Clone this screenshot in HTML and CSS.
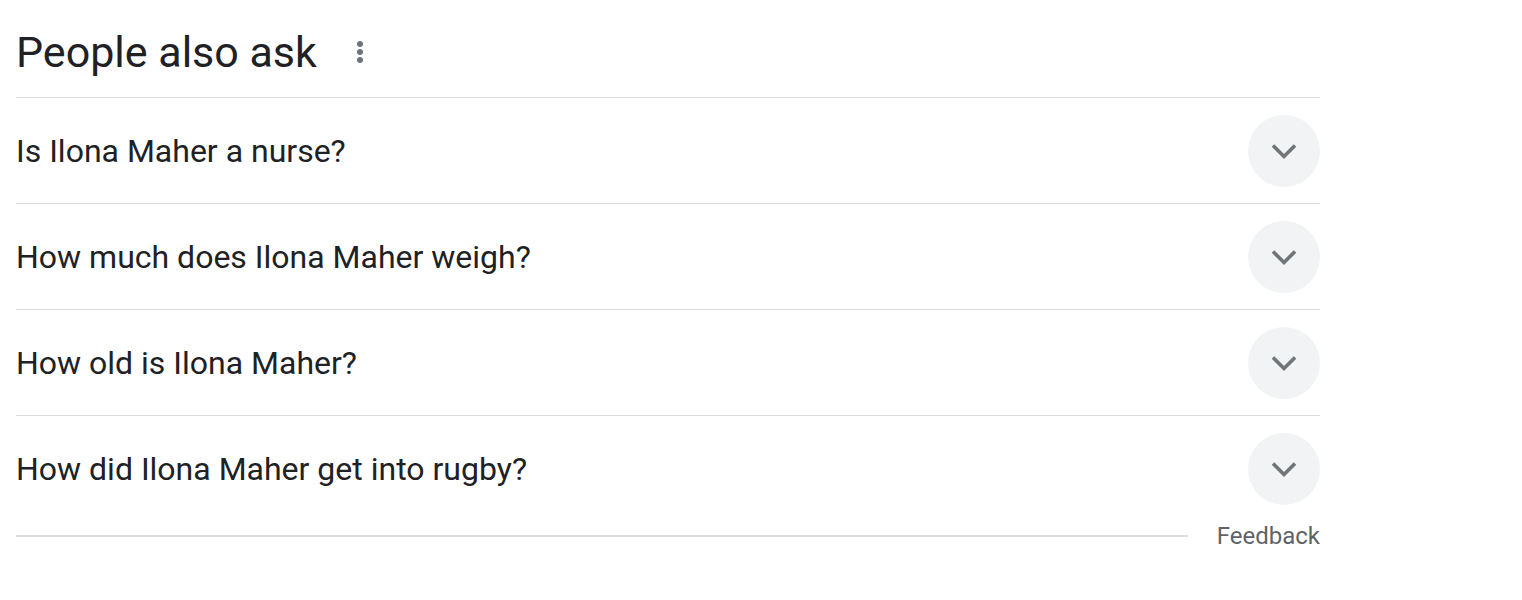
FILE: index.html
```html
<!DOCTYPE html>
<html>
<head>
<meta charset="utf-8">
<link rel="stylesheet" href="styles.css">
</head>
<body>
<div class="paa">
  <div class="paa-head">
    <h2 class="paa-title">People also ask</h2>
    <span class="paa-more" aria-label="More options">
      <svg width="8" height="24" viewBox="0 0 8 24"><circle cx="4" cy="4" r="3" fill="#70757a"/><circle cx="4" cy="12" r="3" fill="#70757a"/><circle cx="4" cy="20" r="3" fill="#70757a"/></svg>
    </span>
  </div>
  <div class="paa-list">
    <div class="paa-row"><span class="paa-q">Is Ilona Maher a nurse?</span><span class="paa-btn"><svg width="28" height="28" viewBox="0 0 28 28"><path d="M3 8.5l11 11 11-11" fill="none" stroke="#70757a" stroke-width="3.6"/></svg></span></div>
    <div class="paa-row"><span class="paa-q">How much does Ilona Maher weigh?</span><span class="paa-btn"><svg width="28" height="28" viewBox="0 0 28 28"><path d="M3 8.5l11 11 11-11" fill="none" stroke="#70757a" stroke-width="3.6"/></svg></span></div>
    <div class="paa-row"><span class="paa-q">How old is Ilona Maher?</span><span class="paa-btn"><svg width="28" height="28" viewBox="0 0 28 28"><path d="M3 8.5l11 11 11-11" fill="none" stroke="#70757a" stroke-width="3.6"/></svg></span></div>
    <div class="paa-row last"><span class="paa-q">How did Ilona Maher get into rugby?</span><span class="paa-btn"><svg width="28" height="28" viewBox="0 0 28 28"><path d="M3 8.5l11 11 11-11" fill="none" stroke="#70757a" stroke-width="3.6"/></svg></span></div>
  </div>
  <div class="paa-foot">
    <div class="paa-line"></div>
    <span class="paa-feedback">Feedback</span>
  </div>
</div>
</body>
</html>
```

FILE: styles.css
```css
html, body {
  margin: 0;
  padding: 0;
  background: #fff;
}
body {
  font-family: Roboto, "Noto Sans", Arial, sans-serif;
  color: #202124;
}
.paa {
  width: 1304px;
  margin-left: 16px;
}
.paa-head {
  display: flex;
  align-items: center;
  height: 97px;
  gap: 39px;
}
.paa-title {
  margin: 0;
  font-weight: 400;
  font-size: 43px;
  line-height: 52px;
  padding-top: 7px;
}
.paa-more {
  display: flex;
  padding-top: 6px;
}
.paa-list {
  border-top: 1px solid #dadce0;
}
.paa-row {
  display: flex;
  align-items: center;
  justify-content: space-between;
  height: 105px;
  border-bottom: 1px solid #dadce0;
}
.paa-row.last {
  border-bottom: none;
}
.paa-q {
  font-size: 32px;
  line-height: 40px;
}
.paa-btn {
  width: 72px;
  height: 72px;
  border-radius: 50%;
  background: #f1f3f4;
  display: flex;
  align-items: center;
  justify-content: center;
}
.paa-foot {
  display: flex;
  align-items: center;
  height: 30px;
  gap: 29px;
}
.paa-line {
  flex: 1;
  border-top: 2px solid #dadce0;
}
.paa-feedback {
  font-size: 24px;
  color: #5f6368;
}
```
